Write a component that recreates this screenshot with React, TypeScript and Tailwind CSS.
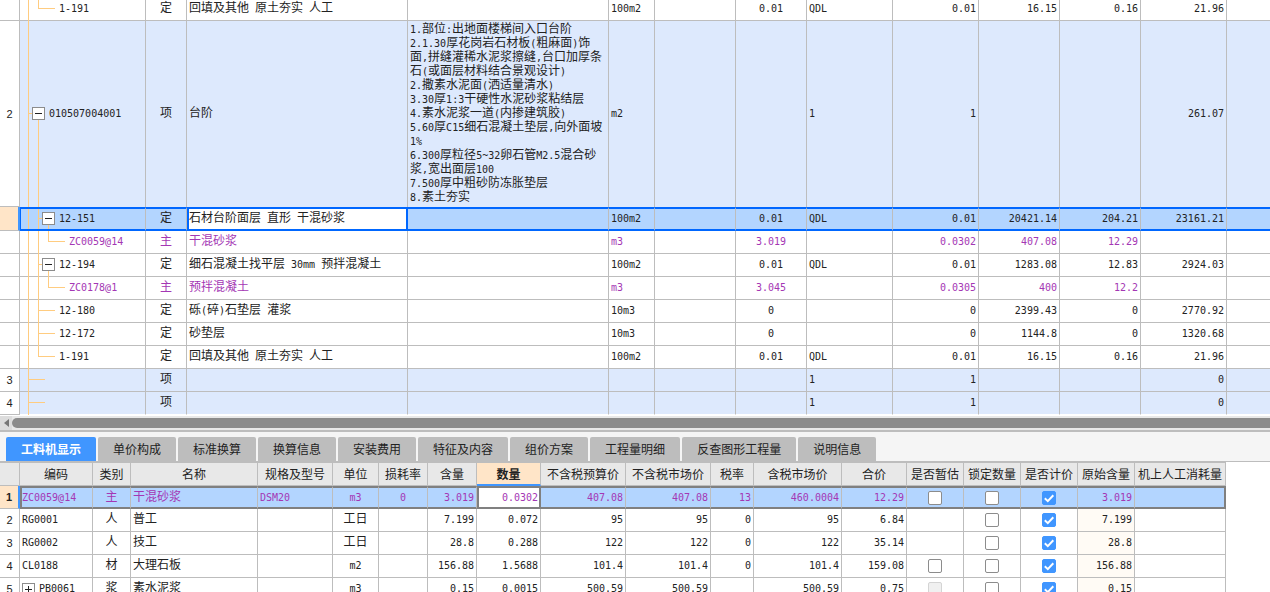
import { useState } from "react";
import clsx from "clsx";

type Kind = "item" | "quota" | "main";
type Node = "root" | "group" | "leaf" | "lastLeaf" | "child" | "empty";

type BillRow = {
  no?: string; node: Node; kind: Kind; code: string; type: string; name: string;
  feature?: string[]; unit: string; content: string; expr: string; qty: string;
  price: string; part: string; total: string; selected?: boolean;
};

const FEATURE = [
  "1.部位:出地面楼梯间入口台阶",
  "2.1.30厚花岗岩石材板(粗麻面)饰",
  "面,拼缝灌稀水泥浆擦缝,台口加厚条",
  "石(或面层材料结合景观设计)",
  "2.撒素水泥面(洒适量清水)",
  "3.30厚1:3干硬性水泥砂浆粘结层",
  "4.素水泥浆一道(内掺建筑胶)",
  "5.60厚C15细石混凝土垫层,向外面坡",
  "1%",
  "6.300厚粒径5~32卵石管M2.5混合砂",
  "浆,宽出面层100",
  "7.500厚中粗砂防冻胀垫层",
  "8.素土夯实",
];

const BILL: BillRow[] = [
  { node: "lastLeaf", kind: "quota", code: "1-191", type: "定", name: "回填及其他 原土夯实 人工", unit: "100m2", content: "0.01", expr: "QDL", qty: "0.01", price: "16.15", part: "0.16", total: "21.96" },
  { no: "2", node: "root", kind: "item", code: "010507004001", type: "项", name: "台阶", feature: FEATURE, unit: "m2", content: "", expr: "1", qty: "1", price: "", part: "", total: "261.07" },
  { node: "group", kind: "quota", code: "12-151", type: "定", name: "石材台阶面层 直形 干混砂浆", unit: "100m2", content: "0.01", expr: "QDL", qty: "0.01", price: "20421.14", part: "204.21", total: "23161.21", selected: true },
  { node: "child", kind: "main", code: "ZC0059@14", type: "主", name: "干混砂浆", unit: "m3", content: "3.019", expr: "", qty: "0.0302", price: "407.08", part: "12.29", total: "" },
  { node: "group", kind: "quota", code: "12-194", type: "定", name: "细石混凝土找平层 30mm 预拌混凝土", unit: "100m2", content: "0.01", expr: "QDL", qty: "0.01", price: "1283.08", part: "12.83", total: "2924.03" },
  { node: "child", kind: "main", code: "ZC0178@1", type: "主", name: "预拌混凝土", unit: "m3", content: "3.045", expr: "", qty: "0.0305", price: "400", part: "12.2", total: "" },
  { node: "leaf", kind: "quota", code: "12-180", type: "定", name: "砾(碎)石垫层 灌浆", unit: "10m3", content: "0", expr: "", qty: "0", price: "2399.43", part: "0", total: "2770.92" },
  { node: "leaf", kind: "quota", code: "12-172", type: "定", name: "砂垫层", unit: "10m3", content: "0", expr: "", qty: "0", price: "1144.8", part: "0", total: "1320.68" },
  { node: "lastLeaf", kind: "quota", code: "1-191", type: "定", name: "回填及其他 原土夯实 人工", unit: "100m2", content: "0.01", expr: "QDL", qty: "0.01", price: "16.15", part: "0.16", total: "21.96" },
  { no: "3", node: "empty", kind: "item", code: "", type: "项", name: "", unit: "", content: "", expr: "1", qty: "1", price: "", part: "", total: "0" },
  { no: "4", node: "empty", kind: "item", code: "", type: "项", name: "", unit: "", content: "", expr: "1", qty: "1", price: "", part: "", total: "0" },
];

const TABS = ["工料机显示", "单价构成", "标准换算", "换算信息", "安装费用", "特征及内容", "组价方案", "工程量明细", "反查图形工程量", "说明信息"];

type CheckState = "on" | "off" | "disabled" | "none";

type Resource = {
  code: string; type: string; name: string; spec: string; unit: string; loss: string;
  content: string; qty: string; budget: string; market: string; tax: string;
  taxed: string; sum: string; estimate: CheckState; origin: string; expandable?: boolean;
};

const RESOURCES: Resource[] = [
  { code: "ZC0059@14", type: "主", name: "干混砂浆", spec: "DSM20", unit: "m3", loss: "0", content: "3.019", qty: "0.0302", budget: "407.08", market: "407.08", tax: "13", taxed: "460.0004", sum: "12.29", estimate: "off", origin: "3.019" },
  { code: "RG0001", type: "人", name: "普工", spec: "", unit: "工日", loss: "", content: "7.199", qty: "0.072", budget: "95", market: "95", tax: "0", taxed: "95", sum: "6.84", estimate: "none", origin: "7.199" },
  { code: "RG0002", type: "人", name: "技工", spec: "", unit: "工日", loss: "", content: "28.8", qty: "0.288", budget: "122", market: "122", tax: "0", taxed: "122", sum: "35.14", estimate: "none", origin: "28.8" },
  { code: "CL0188", type: "材", name: "大理石板", spec: "", unit: "m2", loss: "", content: "156.88", qty: "1.5688", budget: "101.4", market: "101.4", tax: "0", taxed: "101.4", sum: "159.08", estimate: "off", origin: "156.88" },
  { code: "PB0061", type: "浆", name: "素水泥浆", spec: "", unit: "m3", loss: "", content: "0.15", qty: "0.0015", budget: "500.59", market: "500.59", tax: "", taxed: "500.59", sum: "0.75", estimate: "disabled", origin: "0.15", expandable: true },
];

const HEADERS = ["编码", "类别", "名称", "规格及型号", "单位", "损耗率", "含量", "数量", "不含税预算价", "不含税市场价", "税率", "含税市场价", "合价", "是否暂估", "锁定数量", "是否计价", "原始含量", "机上人工消耗量"];

const GRID = "border-r border-[#bdbdbd]";
const PAD = "px-0.5 pt-0 pb-1";

// Latin runs use half-width mono glyphs, two to one Chinese character
function Txt({ children }: { children: string }) {
  return (
    <>
      {children.split(/([\x20-\x7e]+)/).filter(Boolean).map((part, i) =>
        /^[\x20-\x7e]/.test(part)
          ? <span key={i} className="font-['DejaVu_Sans_Mono',monospace] text-[10px] leading-none">{part}</span>
          : <span key={i}>{part}</span>
      )}
    </>
  );
}

function Toggle({ open, label }: { open: boolean; label: string }) {
  return (
    <button type="button" aria-label={label} className="size-[13px] shrink-0 border border-[#8c8c8c] bg-white">
      <svg viewBox="0 0 11 11" className="block size-[11px]" shapeRendering="crispEdges">
        <rect x="2" y="5" width="7" height="1" fill="#222" />
        {!open && <rect x="5" y="2" width="1" height="7" fill="#222" />}
      </svg>
    </button>
  );
}

const INDENT: Record<Node, string> = {
  root: "pl-3 gap-1",
  group: "pl-[22px] gap-1",
  leaf: "pl-[39px]",
  lastLeaf: "pl-[39px]",
  child: "pl-[49px]",
  empty: "pl-[29px]",
};

function TreeCell({ row }: { row: BillRow }) {
  const { node } = row;
  const height = row.feature ? 186 : row.selected ? 20 : 23;
  const mid = Math.floor(height / 2) - 1;
  const expandable = node === "root" || node === "group";
  return (
    <div className={clsx("grid", row.selected && "-ml-px")}>
      <svg
        width="48"
        height={height}
        className={clsx("col-start-1 row-start-1", !row.selected && !row.feature && "-mb-px")}
        fill="#ffcc80"
        shapeRendering="crispEdges"
      >
        <rect x="8" y="0" width="1" height={height} />
        {node === "root" && <>
          <rect x="8" y={mid} width="5" height="1" />
          <rect x="18" y={mid} width="1" height={height - mid} />
        </>}
        {node === "group" && <>
          <rect x="18" y="0" width="1" height={height} />
          <rect x="18" y={mid} width="5" height="1" />
          <rect x="28" y={mid} width="1" height={height - mid} />
        </>}
        {node === "child" && <>
          <rect x="18" y="0" width="1" height={height} />
          <rect x="28" y="0" width="1" height={mid} />
          <rect x="28" y={mid} width="17" height="1" />
        </>}
        {node === "leaf" && <>
          <rect x="18" y="0" width="1" height={height} />
          <rect x="18" y={mid} width="17" height="1" />
        </>}
        {node === "lastLeaf" && <>
          <rect x="18" y="0" width="1" height={mid} />
          <rect x="18" y={mid} width="17" height="1" />
        </>}
        {node === "empty" && <rect x="8" y={mid} width="17" height="1" />}
      </svg>
      <div className={clsx("col-start-1 row-start-1 flex items-center pb-px", INDENT[node])}>
        {expandable && <Toggle open label={`折叠 ${row.code}`} />}
        <span className="pb-[3px]"><Txt>{row.code}</Txt></span>
      </div>
    </div>
  );
}

function BillCells({ row, last }: { row: BillRow; last: boolean }) {
  const frame = clsx(
    GRID,
    row.selected
      ? "border-t-2 border-b-2 border-t-[#0067ff] border-b-[#0067ff] bg-[#b3d5ff]"
      : row.kind === "item" ? "bg-[#dde9fd]" : "bg-white",
    !row.selected && !row.feature && "border-b",
    last && "border-b-white",
  );
  const base = clsx(frame, PAD);
  const center = clsx(base, "text-center");
  const right = clsx(base, "text-right");
  return (
    <>
      <td className={clsx(frame, "p-0", row.selected && "border-l border-l-[#0067ff]")}>
        <TreeCell row={row} />
      </td>
      <td className={center}>{row.type}</td>
      <td className={row.selected ? "border-2 border-[#0067ff] bg-white pt-0 pb-1" : base}>
        <Txt>{row.name}</Txt>
      </td>
      <td className={base}>
        {row.feature?.map(line => <div key={line}><Txt>{line}</Txt></div>)}
      </td>
      <td className={base}><Txt>{row.unit}</Txt></td>
      <td className={base} />
      <td className={center}><Txt>{row.content}</Txt></td>
      <td className={base}><Txt>{row.expr}</Txt></td>
      <td className={right}><Txt>{row.qty}</Txt></td>
      <td className={right}><Txt>{row.price}</Txt></td>
      <td className={right}><Txt>{row.part}</Txt></td>
      <td className={right}><Txt>{row.total}</Txt></td>
      <td className={clsx(base, "border-r-0")} />
    </>
  );
}

function BillTable() {
  return (
    <table className="w-full table-fixed border-separate border-spacing-0">
      <colgroup>
        <col className="w-5" /><col className="w-[126px]" /><col className="w-[41px]" />
        <col className="w-[221px]" /><col className="w-[201px]" /><col className="w-[46px]" />
        <col className="w-[81px]" /><col className="w-[71px]" /><col className="w-[86px]" />
        <col className="w-[86px]" /><col className="w-[81px]" /><col className="w-[81px]" />
        <col className="w-[86px]" /><col />
      </colgroup>
      <tbody>
        {BILL.map((row, i) => (
          <tr
            key={i}
            className={clsx(
              row.feature ? "h-[186px]" : row.selected ? "h-6" : "h-[23px]",
              row.kind === "main" && "text-[#a437b4]",
            )}
          >
            <td className={clsx(
              GRID,
              "border-b p-0 text-center font-['Liberation_Sans',sans-serif] text-[11px]",
              row.selected ? "border-r-2 border-r-[#4096ff] bg-[#ffe5c8]" : "bg-white",
            )}>
              {row.no}
            </td>
            <BillCells row={row} last={i === BILL.length - 1} />
          </tr>
        ))}
      </tbody>
    </table>
  );
}

function Check({ state, label }: { state: CheckState; label: string }) {
  if (state === "none") return null;
  return (
    <span className="mx-auto grid size-[14px]">
      <input
        type="checkbox"
        aria-label={label}
        defaultChecked={state === "on"}
        disabled={state === "disabled"}
        className="peer col-start-1 row-start-1 size-[14px] appearance-none rounded-xs border border-[#8c8c8c] bg-white checked:border-[#4096ff] checked:bg-[#4096ff] disabled:border-[#d4d4d4] disabled:bg-[#f0f0f0]"
      />
      <svg viewBox="0 0 14 14" className="pointer-events-none col-start-1 row-start-1 hidden size-[14px] peer-checked:block">
        <path d="M2.8 7.2 5.8 10.1 11.3 4.2" fill="none" stroke="#fff" strokeWidth="2" />
      </svg>
    </span>
  );
}

function ResourceTable() {
  return (
    <table className="w-[1226px] table-fixed border-separate border-spacing-0">
      <colgroup>
        <col className="w-5" /><col className="w-[73px]" /><col className="w-[38px]" />
        <col className="w-[127px]" /><col className="w-[75px]" /><col className="w-[46px]" />
        <col className="w-[49px]" /><col className="w-[49px]" /><col className="w-16" />
        <col className="w-[85px]" /><col className="w-[85px]" /><col className="w-[43px]" />
        <col className="w-[88px]" /><col className="w-[65px]" /><col className="w-[57px]" />
        <col className="w-[57px]" /><col className="w-[57px]" /><col className="w-[57px]" />
        <col className="w-[91px]" />
      </colgroup>
      <thead>
        <tr className="h-6">
          <th className={clsx(GRID, "border-t border-b bg-[#e8e8e8] p-0")} />
          {HEADERS.map(h => (
            <th
              key={h}
              scope="col"
              className={clsx(
                GRID,
                "border-t p-0",
                h === "数量" ? "border-b-2 border-b-[#4096ff] bg-[#ffe5c8] font-bold" : "border-b bg-[#e8e8e8] font-normal",
              )}
            >
              {h}
            </th>
          ))}
        </tr>
      </thead>
      <tbody>
        {RESOURCES.map((r, i) => {
          const active = i === 0;
          const edge = active ? "border-t-2 border-b-2 border-t-[#808080] border-b-[#808080]" : "border-b";
          const frame = clsx(GRID, edge, active ? "bg-[#b3d5ff]" : "bg-white");
          const cell = clsx(frame, PAD);
          const right = clsx(cell, "text-right");
          const center = clsx(cell, "text-center");
          return (
            <tr key={r.code} className={clsx("h-[23px]", active && "text-[#a437b4]")}>
              <th
                scope="row"
                className={clsx(
                  GRID,
                  "border-b p-0 font-['Liberation_Sans',sans-serif] text-[11px] text-[#222]",
                  active ? "border-r-2 border-r-[#4096ff] bg-[#ffe5c8] font-bold" : "bg-white font-normal",
                )}
              >
                {i + 1}
              </th>
              <td className={clsx(frame, active ? "border-l-2 border-l-[#808080] pb-1" : "px-0.5 py-0")}>
                <span className="flex items-center gap-1">
                  {r.expandable && <Toggle open={false} label={`展开 ${r.code}`} />}
                  <span className={active ? undefined : "pb-1"}><Txt>{r.code}</Txt></span>
                </span>
              </td>
              <td className={center}>{r.type}</td>
              <td className={cell}>{r.name}</td>
              <td className={cell}><Txt>{r.spec}</Txt></td>
              <td className={center}><Txt>{r.unit}</Txt></td>
              <td className={center}><Txt>{r.loss}</Txt></td>
              <td className={right}><Txt>{r.content}</Txt></td>
              <td className={active ? "border-2 border-[#808080] bg-white px-px pt-0 pb-1 text-right" : right}>
                <Txt>{r.qty}</Txt>
              </td>
              <td className={right}><Txt>{r.budget}</Txt></td>
              <td className={right}><Txt>{r.market}</Txt></td>
              <td className={right}><Txt>{r.tax}</Txt></td>
              <td className={right}><Txt>{r.taxed}</Txt></td>
              <td className={right}><Txt>{r.sum}</Txt></td>
              <td className={clsx(frame, "p-0")}><Check state={r.estimate} label={`${r.code} 是否暂估`} /></td>
              <td className={clsx(frame, "p-0")}><Check state="off" label={`${r.code} 锁定数量`} /></td>
              <td className={clsx(frame, "p-0")}><Check state="on" label={`${r.code} 是否计价`} /></td>
              <td className={clsx(GRID, edge, PAD, "text-right", active ? "bg-[#b3d5ff]" : "bg-[#fffbf5]")}>
                <Txt>{r.origin}</Txt>
              </td>
              <td className={clsx(cell, active && "border-r-2 border-r-[#808080]")} />
            </tr>
          );
        })}
      </tbody>
    </table>
  );
}

export default function App() {
  const [tab, setTab] = useState(TABS[0]);

  return (
    <div className="flex h-screen flex-col overflow-hidden bg-white font-['Noto_Sans_CJK_SC',sans-serif] text-[12px] leading-[14px] whitespace-pre text-[#222]">

      {/* Bill of quantities */}
      <div className="flex min-h-0 flex-1 flex-col justify-end overflow-hidden pb-px">
        <BillTable />
      </div>

      {/* Horizontal scrollbar */}
      <div className="flex h-4 shrink-0 border-b-2 border-[#bdbdbd] bg-[#e8e8e8]">
        <button type="button" aria-label="向左滚动" className="flex w-3 items-center justify-center bg-[#dcdcdc]">
          <svg viewBox="0 0 5 8" className="h-2 w-[5px]"><path d="M5 0v8L0 4z" fill="#777" /></svg>
        </button>
        <div className="my-0.5 flex-1 rounded-l-full bg-[#8b8b8b]" />
      </div>

      {/* Detail pane */}
      <div className="h-40 shrink-0 overflow-hidden">
        <div role="tablist" className="flex gap-0.5 border-b border-[#bdbdbd] bg-[#f5f5f5] px-1.5 pt-[5px]">
          {TABS.map(t => (
            <button
              key={t}
              type="button"
              role="tab"
              aria-selected={tab === t}
              onClick={() => setTab(t)}
              className={clsx(
                "h-6 rounded-t-xs px-[15px]",
                tab === t ? "bg-[#4096ff] font-bold text-white" : "bg-[#bdbdbd]",
              )}
            >
              {t}
            </button>
          ))}
        </div>
        <ResourceTable />
      </div>
    </div>
  );
}
